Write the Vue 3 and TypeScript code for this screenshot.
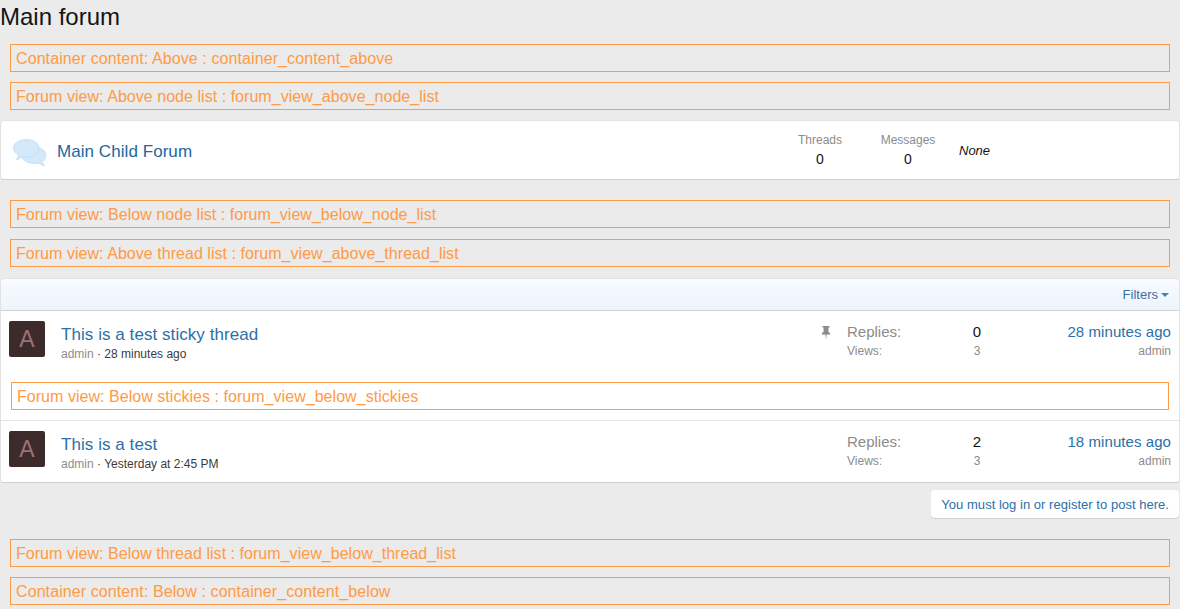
<script setup lang="ts">
interface Thread { title: string; meta: string; replies: number; views: number; last: string; sticky: boolean }
const sticky: Thread = { title: 'This is a test sticky thread', meta: '28 minutes ago', replies: 0, views: 3, last: '28 minutes ago', sticky: true }
const normal: Thread = { title: 'This is a test', meta: 'Yesterday at 2:45 PM', replies: 2, views: 3, last: '18 minutes ago', sticky: false }
const rows: Thread[] = [sticky, normal]
</script>

<template>
  <div class="page">
    <h1 class="title">Main forum</h1>
    <div class="pos wider">Container content: Above : container_content_above</div>
    <div class="pos">Forum view: Above node list : forum_view_above_node_list</div>

    <section class="block node">
      <svg class="node-icon" viewBox="0 0 34 28" width="34" height="28" aria-hidden="true">
        <path d="M21 8c7 0 12 3.600 12 8.500 0 2.800-1.500 5-4 6.500l2.500 4-6.500-2.800c-1.200.3-2.600.3-4 .3-7 0-12-3.500-12-8 0-4.900 5-8.500 12-8.500z" fill="#d3e8f8" stroke="#c3ddf1" stroke-width=".7"/>
        <path d="M13.500.5C20.800.5 26 4 26 9.300c0 5.200-5.200 8.700-12.500 8.700-1.300 0-2.500-.1-3.600-.3L3.500 21l2.200-5.200C2.500 14.200.5 12 .5 9.300.5 4 6.200.5 13.500.5z" fill="#d3e8f8" stroke="#bcd9ef" stroke-width=".7"/>
      </svg>
      <a class="node-title">Main Child Forum</a>
      <div class="node-stat threads"><span class="label">Threads</span><span class="num">0</span></div>
      <div class="node-stat messages"><span class="label">Messages</span><span class="num">0</span></div>
      <em class="none">None</em>
    </section>

    <div class="pos after-node">Forum view: Below node list : forum_view_below_node_list</div>
    <div class="pos wide">Forum view: Above thread list : forum_view_above_thread_list</div>

    <section class="block threads-block">
      <header class="filter-bar"><a class="filters">Filters<i class="caret"></i></a></header>
      <template v-for="(t, i) in rows" :key="t.title">
        <article class="row" :class="{ 'row-last': i === 1 }">
          <div class="avatar">A</div>
          <div class="main">
            <a class="thread-title">{{ t.title }}</a>
            <div class="meta"><span class="user">admin</span> · {{ t.meta }}</div>
          </div>
          <div class="pin">
            <svg v-if="t.sticky" viewBox="0 0 10 14" width="10" height="14" aria-hidden="true">
              <path d="M1.500 0h7v1.500H7.400v4.200c1.100.7 1.900 1.600 1.900 2.800H5.600L5 14l-.6-5.500H.7c0-1.200.8-2.100 1.900-2.800V1.500H1.500z" fill="#8c8c8c"/>
            </svg>
          </div>
          <div class="stats">
            <span class="s-label">Replies:</span><span class="s-val">{{ t.replies }}</span>
            <span class="v-label">Views:</span><span class="v-val">{{ t.views }}</span>
          </div>
          <div class="last">
            <a class="last-date">{{ t.last }}</a>
            <span class="last-user">admin</span>
          </div>
        </article>
        <div v-if="i === 0" class="pos inner">Forum view: Below stickies : forum_view_below_stickies</div>
      </template>
    </section>

    <div class="login-line"><a class="login">You must log in or register to post here.</a></div>

    <div class="pos after-login">Forum view: Below thread list : forum_view_below_thread_list</div>
    <div class="pos wider">Container content: Below : container_content_below</div>
  </div>
</template>

<style>
html, body { margin: 0; background: #ebebeb; }
</style>

<style scoped>
.page {
  box-sizing: border-box;
  width: 1180px;
  height: 609px;
  overflow: hidden;
  font-family: "Liberation Sans", Arial, sans-serif;
  background: #ebebeb;
  color: #141414;
}
.title {
  margin: 0;
  height: 34px;
  font-size: 24px;
  font-weight: 400;
  line-height: 34px;
}
.pos {
  box-sizing: border-box;
  height: 28px;
  margin: 10px 10px 0;
  padding: 0 5px;
  border: 1px solid #ff9a45;
  color: #ff9a45;
  font-size: 16px;
  letter-spacing: 0.04px;
  line-height: 28px;
}
.wider { letter-spacing: 0.09px; }
.after-node { margin-top: 20px; }
.wide { margin-top: 11px; }
.after-login { margin-top: 21px; }
.block {
  box-sizing: border-box;
  background: #fff;
  border: 1px solid #e2e2e2;
  border-bottom-color: #cfcfcf;
  border-radius: 4px;
}
.node {
  display: flex;
  align-items: center;
  height: 60px;
  margin-top: 10px;
}
.node-icon { margin-left: 12px; flex: none; margin-top: 6px; }
.node-title {
  margin-left: 10px;
  margin-top: 4px;
  width: 715px;
  flex: none;
  color: #22679d;
  font-size: 17px;
  letter-spacing: 0.06px;
}
.node-stat {
  display: flex;
  flex-direction: column;
  align-items: center;
  flex: none;
  margin-top: 1px;
}
.threads { width: 88px; margin-left: 4px; }
.messages { width: 88px; }
.label { color: #8c8c8c; font-size: 12px; line-height: 16px; }
.num { color: #141414; font-size: 14px; line-height: 20px; margin-top: 1px; }
.none { margin-left: 7px; font-size: 13px; color: #141414; margin-top: 1px; }
.threads-block { margin-top: 11px; }
.filter-bar {
  display: flex;
  align-items: center;
  justify-content: flex-end;
  box-sizing: border-box;
  height: 32px;
  padding: 0 10px 0 0;
  background: linear-gradient(#f8fbff, #edf4fd);
  border-bottom: 1px solid #cdd2d6;
  border-radius: 3px 3px 0 0;
}
.filters { color: #3f6ea3; font-size: 13px; display: flex; align-items: center; }
.caret {
  margin-left: 3px;
  width: 0;
  height: 0;
  border: 4px solid transparent;
  border-top-color: #3f82b8;
  border-bottom: 0;
}
.row {
  display: flex;
  box-sizing: border-box;
  height: 71px;
  padding: 10px 8px 0;
}
.row-last { border-top: 1px solid #e6e6e6; height: 62px; margin-top: 10px; }
.avatar {
  flex: none;
  width: 36px;
  height: 36px;
  border-radius: 2px;
  background: #3d2b2b;
  color: #9a7474;
  font-size: 23px;
  line-height: 36px;
  text-align: center;
}
.main { margin-left: 16px; flex: 1; min-width: 0; }
.thread-title {
  display: block;
  color: #2a70aa;
  font-size: 17px;
  letter-spacing: 0.06px;
  line-height: 24px;
  margin-top: 2px;
}
.meta { color: #3c3c3c; font-size: 12px; line-height: 16px; margin-top: -1px; }
.user { color: #8c8c8c; }
.pin { flex: none; width: 26px; padding-top: 5px; text-align: left; }
.stats {
  flex: none;
  width: 142px;
  display: grid;
  grid-template-columns: 125px 10px;
  grid-template-rows: 20px 20px;
  align-items: center;
  justify-items: start;
}
.s-label { color: #8c8c8c; font-size: 15px; }
.s-val { color: #141414; font-size: 15px; justify-self: center; }
.v-label { color: #8c8c8c; font-size: 12px; }
.v-val { color: #8c8c8c; font-size: 12px; justify-self: center; }
.last {
  flex: none;
  width: 182px;
  display: flex;
  flex-direction: column;
  align-items: flex-end;
}
.last-date { color: #2a70aa; font-size: 15px; letter-spacing: 0.07px; line-height: 22px; }
.last-user { color: #8c8c8c; font-size: 12px; line-height: 16px; }
.inner { margin: 0 10px; }
.login-line { display: flex; justify-content: flex-end; margin: 7px 1px 0; }
.login {
  box-sizing: border-box;
  height: 28px;
  padding: 0 10px;
  background: #fff;
  border-radius: 4px;
  box-shadow: 0 1px 0 #cfcfcf;
  color: #2a70aa;
  font-size: 13px;
  letter-spacing: 0.03px;
  line-height: 29px;
}
</style>
